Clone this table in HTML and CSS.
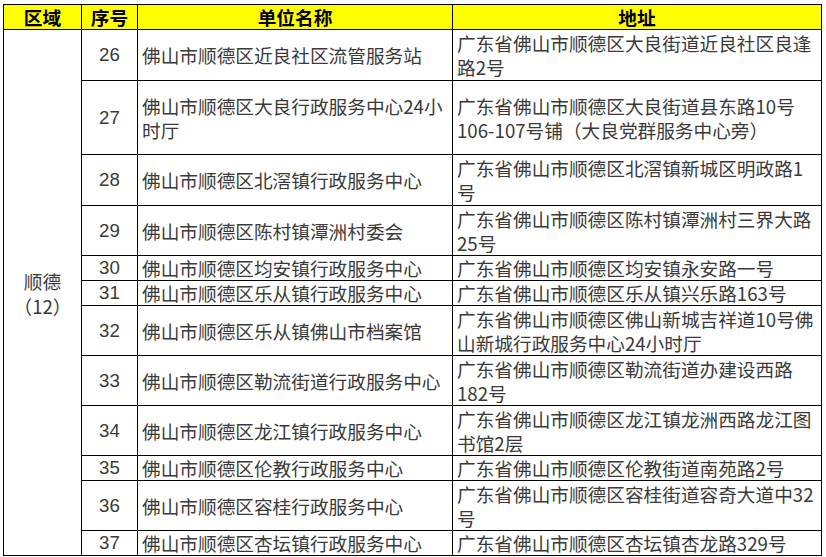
FILE: index.html
```html
<!DOCTYPE html>
<html lang="zh-CN">
<head>
<meta charset="utf-8">
<title>顺德</title>
<link rel="stylesheet" href="styles.css">
</head>
<body>
<div class="sheet">
<table class="grid">
  <colgroup>
    <col class="c-area">
    <col class="c-no">
    <col class="c-name">
    <col class="c-addr">
  </colgroup>
  <thead>
    <tr class="h-head">
      <th>区域</th><th>序号</th><th>单位名称</th><th>地址</th>
    </tr>
  </thead>
  <tbody>
    <tr class="h51">
      <td class="area" rowspan="12">顺德<br>（12）</td>
      <td class="no">26</td>
      <td class="txt">佛山市顺德区近良社区流管服务站</td>
      <td class="txt">广东省佛山市顺德区大良街道近良社区良逢<br>路2号</td>
    </tr>
    <tr class="h74">
      <td class="no">27</td>
      <td class="txt">佛山市顺德区大良行政服务中心24小<br>时厅</td>
      <td class="txt">广东省佛山市顺德区大良街道县东路10号<br>106-107号铺（大良党群服务中心旁）</td>
    </tr>
    <tr class="h51">
      <td class="no">28</td>
      <td class="txt">佛山市顺德区北滘镇行政服务中心</td>
      <td class="txt">广东省佛山市顺德区北滘镇新城区明政路1<br>号</td>
    </tr>
    <tr class="h50">
      <td class="no">29</td>
      <td class="txt">佛山市顺德区陈村镇潭洲村委会</td>
      <td class="txt">广东省佛山市顺德区陈村镇潭洲村三界大路<br>25号</td>
    </tr>
    <tr class="h25">
      <td class="no">30</td>
      <td class="txt">佛山市顺德区均安镇行政服务中心</td>
      <td class="txt">广东省佛山市顺德区均安镇永安路一号</td>
    </tr>
    <tr class="h25">
      <td class="no">31</td>
      <td class="txt">佛山市顺德区乐从镇行政服务中心</td>
      <td class="txt">广东省佛山市顺德区乐从镇兴乐路163号</td>
    </tr>
    <tr class="h50">
      <td class="no">32</td>
      <td class="txt">佛山市顺德区乐从镇佛山市档案馆</td>
      <td class="txt">广东省佛山市顺德区佛山新城吉祥道10号佛<br>山新城行政服务中心24小时厅</td>
    </tr>
    <tr class="h50">
      <td class="no">33</td>
      <td class="txt">佛山市顺德区勒流街道行政服务中心</td>
      <td class="txt">广东省佛山市顺德区勒流街道办建设西路<br>182号</td>
    </tr>
    <tr class="h50">
      <td class="no">34</td>
      <td class="txt">佛山市顺德区龙江镇行政服务中心</td>
      <td class="txt">广东省佛山市顺德区龙江镇龙洲西路龙江图<br>书馆2层</td>
    </tr>
    <tr class="h25">
      <td class="no">35</td>
      <td class="txt">佛山市顺德区伦教行政服务中心</td>
      <td class="txt">广东省佛山市顺德区伦教街道南苑路2号</td>
    </tr>
    <tr class="h50">
      <td class="no">36</td>
      <td class="txt">佛山市顺德区容桂行政服务中心</td>
      <td class="txt">广东省佛山市顺德区容桂街道容奇大道中32<br>号</td>
    </tr>
    <tr class="h25">
      <td class="no">37</td>
      <td class="txt">佛山市顺德区杏坛镇行政服务中心</td>
      <td class="txt">广东省佛山市顺德区杏坛镇杏龙路329号</td>
    </tr>
  </tbody>
</table>
</div>
</body>
</html>
```
FILE: styles.css
```css
html, body {
  margin: 0;
  padding: 0;
  background: #ffffff;
}

.sheet {
  padding: 4px 0 0 3px;
}

.grid {
  border-collapse: collapse;
  table-layout: fixed;
  width: 818px;
  font-family: "Noto Sans CJK SC", sans-serif;
  font-size: 18.67px;
  line-height: 24px;
  color: #3a3a3a;
}

.c-area { width: 78px; }
.c-no { width: 56px; }
.c-name { width: 315px; }
.c-addr { width: 369px; }

.grid th,
.grid td {
  border: 1px solid #000;
  padding: 0;
  vertical-align: middle;
  overflow: hidden;
  white-space: nowrap;
}

.grid th {
  background: #ffff00;
  color: #000;
  font-weight: 700;
  text-align: center;
  line-height: 22px;
}

.h-head th { height: 24px; }
.h25 td { height: 24px; }
.h50 td { height: 49px; }
.h51 td { height: 50px; }
.h74 td { height: 73px; }

.grid td.area {
  text-align: center;
  line-height: 25px;
}

.grid td.no {
  text-align: center;
  font-family: "Liberation Sans", sans-serif;
  font-size: 18.67px;
}

.grid td.txt {
  padding-left: 4px;
  text-align: left;
}
```
